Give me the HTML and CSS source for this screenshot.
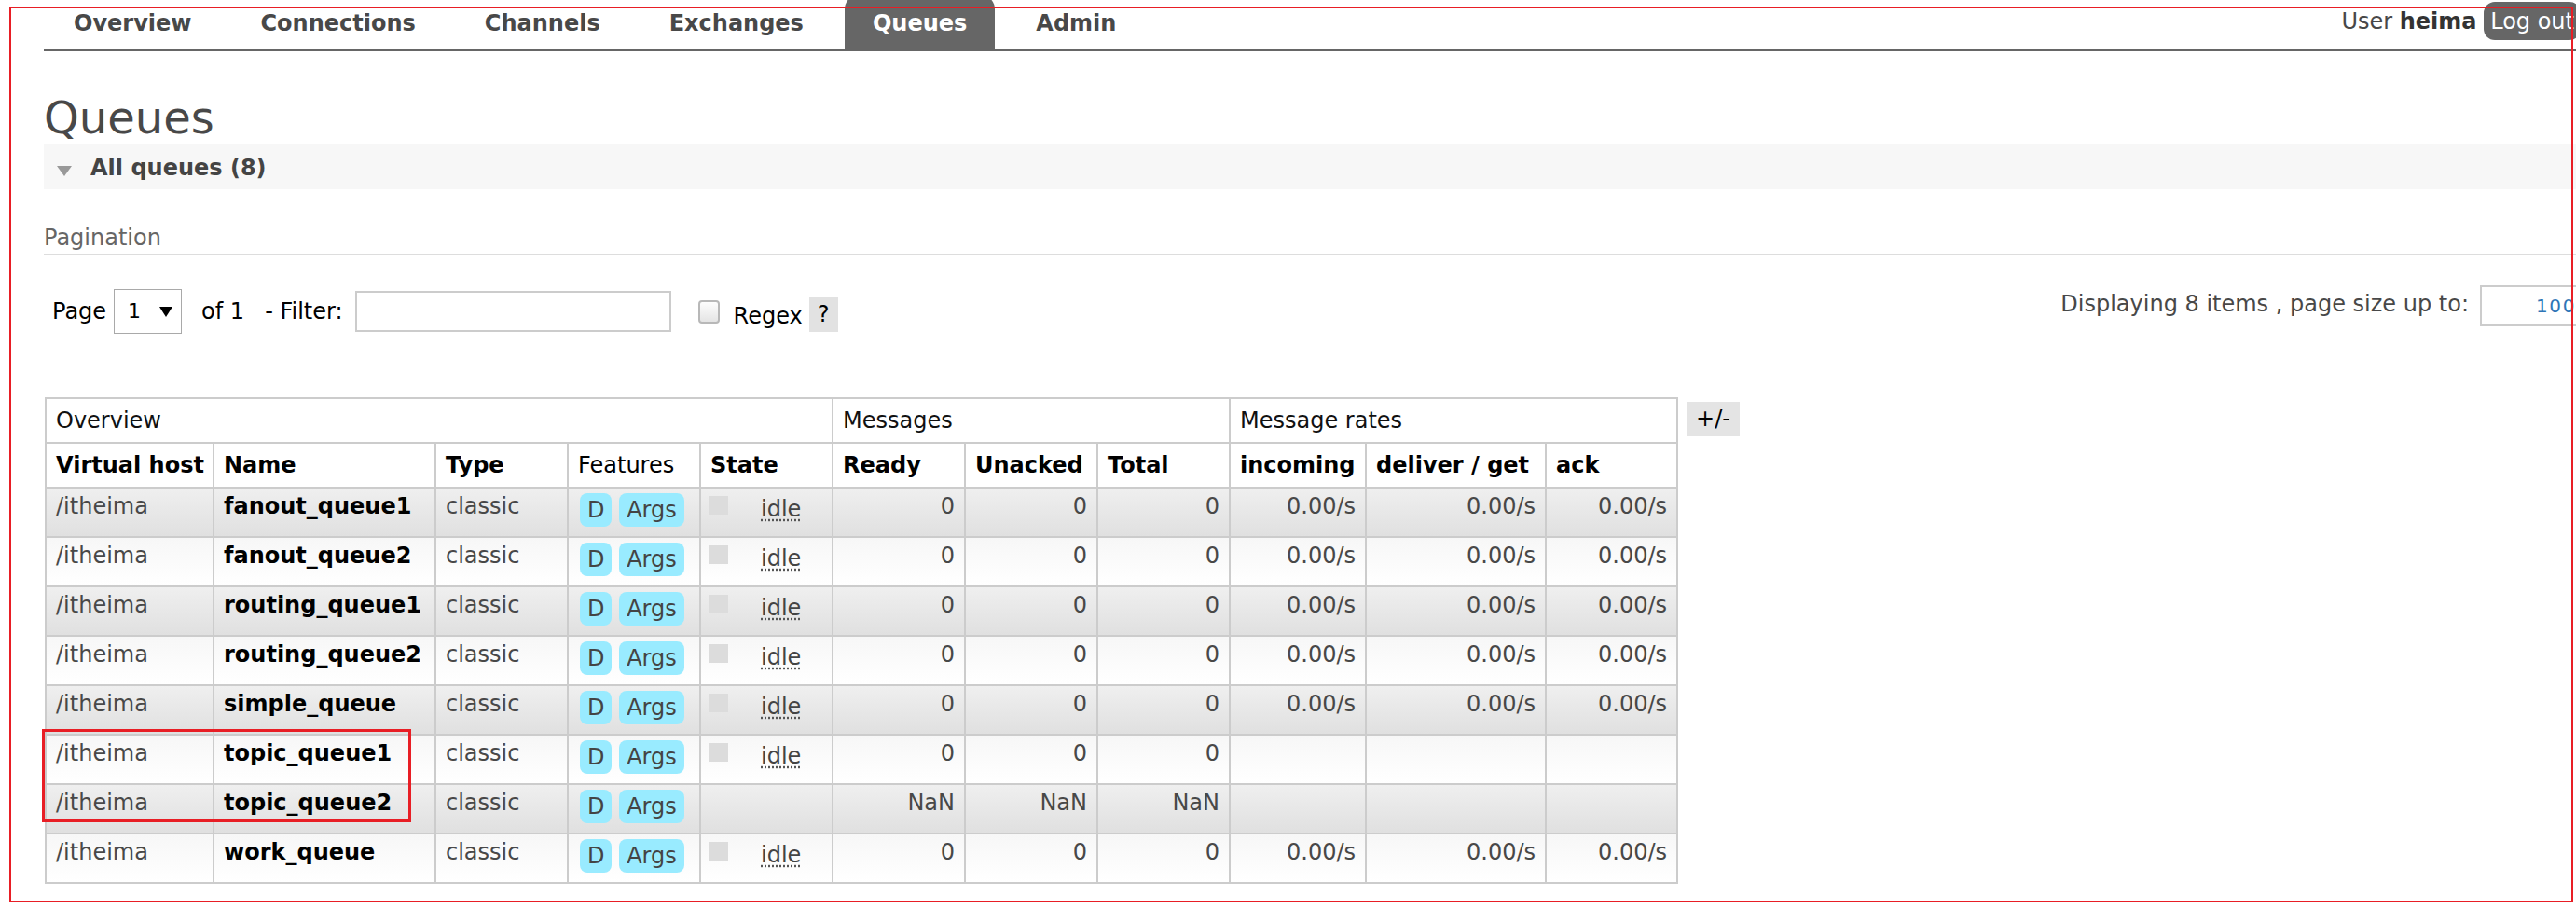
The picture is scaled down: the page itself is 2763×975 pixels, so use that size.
FILE: index.html
```html
<!DOCTYPE html>
<html lang="en">
<head>
<meta charset="utf-8">
<title>RabbitMQ Management: Queues</title>
<link rel="stylesheet" href="styles.css">
</head>
<body>
<div class="page">
  <header class="topbar">
    <ul class="menu">
      <li><a>Overview</a></li>
      <li><a>Connections</a></li>
      <li><a>Channels</a></li>
      <li><a>Exchanges</a></li>
      <li><a class="selected">Queues</a></li>
      <li><a>Admin</a></li>
    </ul>
    <div class="login">User <b>heima</b> <span class="logout">Log out</span></div>
  </header>

  <h1 class="title">Queues</h1>

  <div class="section-head"><span class="tri"></span><h2>All queues (8)</h2></div>

  <h3 class="pag-title">Pagination</h3>
  <div class="pag-row">
    <div class="pag-left">
      <span class="lbl lbl-page">Page</span>
      <span class="fake-select"><span>1</span><span class="arrow"></span></span>
      <span class="lbl lbl-of">of 1</span>
      <span class="lbl lbl-filter">- Filter:</span>
      <input class="filter" type="text">
      <span class="checkbox"></span>
      <span class="lbl lbl-regex">Regex</span>
      <span class="help">?</span>
    </div>
    <div class="pag-right">
      <span class="lbl lbl-display">Displaying 8 items , page size up to:</span>
      <input class="pagesize" type="text" value="100">
    </div>
  </div>

  <div class="table-wrap">
    <table class="list">
      <colgroup>
        <col class="w-vh"><col class="w-name"><col class="w-std"><col class="w-std"><col class="w-std"><col class="w-std"><col class="w-std"><col class="w-std"><col class="w-inc"><col class="w-del"><col class="w-ack">
      </colgroup>
      <thead>
        <tr class="group"><th colspan="5">Overview</th><th colspan="3">Messages</th><th colspan="3">Message rates</th></tr>
        <tr><th>Virtual host</th><th>Name</th><th>Type</th><th class="plain">Features</th><th>State</th><th>Ready</th><th>Unacked</th><th>Total</th><th>incoming</th><th>deliver / get</th><th>ack</th></tr>
      </thead>
      <tbody>
        <tr class="alt1"><td>/itheima</td><td class="name">fanout_queue1</td><td>classic</td><td class="feat"><span class="badge">D</span> <span class="badge">Args</span></td><td><span class="sq"></span><abbr class="idle">idle</abbr></td><td class="r">0</td><td class="r">0</td><td class="r">0</td><td class="r">0.00/s</td><td class="r">0.00/s</td><td class="r">0.00/s</td></tr>
        <tr class="alt2"><td>/itheima</td><td class="name">fanout_queue2</td><td>classic</td><td class="feat"><span class="badge">D</span> <span class="badge">Args</span></td><td><span class="sq"></span><abbr class="idle">idle</abbr></td><td class="r">0</td><td class="r">0</td><td class="r">0</td><td class="r">0.00/s</td><td class="r">0.00/s</td><td class="r">0.00/s</td></tr>
        <tr class="alt1"><td>/itheima</td><td class="name">routing_queue1</td><td>classic</td><td class="feat"><span class="badge">D</span> <span class="badge">Args</span></td><td><span class="sq"></span><abbr class="idle">idle</abbr></td><td class="r">0</td><td class="r">0</td><td class="r">0</td><td class="r">0.00/s</td><td class="r">0.00/s</td><td class="r">0.00/s</td></tr>
        <tr class="alt2"><td>/itheima</td><td class="name">routing_queue2</td><td>classic</td><td class="feat"><span class="badge">D</span> <span class="badge">Args</span></td><td><span class="sq"></span><abbr class="idle">idle</abbr></td><td class="r">0</td><td class="r">0</td><td class="r">0</td><td class="r">0.00/s</td><td class="r">0.00/s</td><td class="r">0.00/s</td></tr>
        <tr class="alt1"><td>/itheima</td><td class="name">simple_queue</td><td>classic</td><td class="feat"><span class="badge">D</span> <span class="badge">Args</span></td><td><span class="sq"></span><abbr class="idle">idle</abbr></td><td class="r">0</td><td class="r">0</td><td class="r">0</td><td class="r">0.00/s</td><td class="r">0.00/s</td><td class="r">0.00/s</td></tr>
        <tr class="alt2"><td>/itheima</td><td class="name">topic_queue1</td><td>classic</td><td class="feat"><span class="badge">D</span> <span class="badge">Args</span></td><td><span class="sq"></span><abbr class="idle">idle</abbr></td><td class="r">0</td><td class="r">0</td><td class="r">0</td><td class="r"></td><td class="r"></td><td class="r"></td></tr>
        <tr class="alt1"><td>/itheima</td><td class="name">topic_queue2</td><td>classic</td><td class="feat"><span class="badge">D</span> <span class="badge">Args</span></td><td></td><td class="r">NaN</td><td class="r">NaN</td><td class="r">NaN</td><td class="r"></td><td class="r"></td><td class="r"></td></tr>
        <tr class="alt2"><td>/itheima</td><td class="name">work_queue</td><td>classic</td><td class="feat"><span class="badge">D</span> <span class="badge">Args</span></td><td><span class="sq"></span><abbr class="idle">idle</abbr></td><td class="r">0</td><td class="r">0</td><td class="r">0</td><td class="r">0.00/s</td><td class="r">0.00/s</td><td class="r">0.00/s</td></tr>
      </tbody>
    </table>
    <span class="plusminus">+/-</span>
  </div>
</div>

<div class="annot annot-page"></div>
<div class="annot annot-rows"></div>
</body>
</html>
```

FILE: styles.css
```css
* { box-sizing: border-box; }

html, body {
  margin: 0;
  padding: 0;
  overflow: hidden;
  background: #fff;
}

body {
  font-family: "DejaVu Sans", Verdana, sans-serif;
  font-size: 24px;
  line-height: 28px;
  color: #484848;
  height: 975px;
}

.page {
  width: 2768px;
  padding-left: 47px;
}

/* ---------- header / menu ---------- */
.topbar {
  display: flex;
  justify-content: space-between;
  align-items: flex-start;
  margin-top: -6px;
  border-bottom: 2px solid #666;
}

.menu {
  display: flex;
  list-style: none;
  margin: 0;
  padding: 0 0 0 2px;
}

.menu li { margin-right: 14px; }

.menu a {
  display: block;
  padding: 17px 30px 14px;
  font-weight: bold;
  color: #484848;
  text-decoration: none;
  border-radius: 16px 16px 0 0;
}

.menu a.selected {
  background: #666;
  color: #fff;
}

.login {
  margin-top: 8px;
  white-space: nowrap;
}

.login b { color: #333; }

.logout {
  display: inline-block;
  background: #666;
  color: #fff;
  padding: 7px 7px 6px;
  border-radius: 12px;
}

/* ---------- title & section ---------- */
.title {
  margin: 43px 0 0;
  font-size: 48px;
  line-height: 56px;
  font-weight: normal;
  color: #484848;
}

.section-head {
  display: flex;
  align-items: flex-start;
  background: #f7f7f7;
  padding: 12px 0 9px 14px;
}

.tri {
  width: 0;
  height: 0;
  border-left: 8px solid transparent;
  border-right: 8px solid transparent;
  border-top: 11px solid #999;
  margin: 12px 20px 0 0;
}

.section-head h2 {
  margin: 0;
  font-size: 24px;
  line-height: 28px;
  font-weight: bold;
  color: #444;
}

/* ---------- pagination ---------- */
.pag-title {
  margin: 38px 0 0;
  font-size: 24px;
  line-height: 28px;
  font-weight: normal;
  color: #666;
  padding-bottom: 3px;
  border-bottom: 2px solid #ddd;
}

.pag-row {
  display: flex;
  justify-content: space-between;
  align-items: flex-start;
  margin-top: 32px;
  color: #000;
}

.pag-left, .pag-right {
  display: flex;
  align-items: flex-start;
}

.lbl { white-space: nowrap; }

.lbl-page { margin: 14px 0 0 9px; }

.fake-select {
  display: flex;
  align-items: center;
  width: 73px;
  height: 48px;
  margin: 4px 0 0 8px;
  border: 1px solid #a9a9a9;
  padding-left: 14px;
  font-size: 22px;
  line-height: 26px;
  background: #fff;
}

.fake-select .arrow {
  width: 0;
  height: 0;
  border-left: 7px solid transparent;
  border-right: 7px solid transparent;
  border-top: 11px solid #000;
  margin-left: 20px;
}

.lbl-of { margin: 14px 0 0 21px; }
.lbl-filter { margin: 14px 0 0 22px; }

.filter {
  width: 339px;
  height: 44px;
  margin: 6px 0 0 13px;
  border: 2px solid #ccc;
  padding: 0 4px;
  background: #fff;
  outline: none;
}

.checkbox {
  width: 23px;
  height: 25px;
  margin: 16px 0 0 29px;
  border: 2px solid #b8b8b8;
  border-radius: 4px;
  background: linear-gradient(#fdfdfd, #e4e4e4);
}

.lbl-regex { margin: 19px 0 0 15px; }

.help {
  margin: 13px 0 0 7px;
  width: 31px;
  padding: 4px 0 5px;
  text-align: center;
  background: #e2e2e2;
}

.lbl-display {
  margin-top: 6px;
  color: #484848;
}

.pagesize {
  width: 108px;
  height: 44px;
  margin-left: 12px;
  border: 2px solid #ccc;
  padding: 0 3px 0 0;
  font-family: "DejaVu Sans", Verdana, sans-serif;
  font-size: 20px;
  letter-spacing: 1.6px;
  color: #2e75b6;
  text-align: right;
  background: #fff;
  outline: none;
}

/* ---------- table ---------- */
.table-wrap {
  display: flex;
  align-items: flex-start;
  margin: 68px 0 0 1px;
}

table.list {
  table-layout: fixed;
  width: 1752px;
  border-collapse: separate;
  border-spacing: 0;
  border-top: 2px solid #ccc;
  border-left: 2px solid #ccc;
}

.w-vh { width: 180px; }
.w-name { width: 238px; }
.w-std { width: 142px; }
.w-inc { width: 146px; }
.w-del { width: 193px; }
.w-ack { width: 141px; }

.list th, .list td {
  border-right: 2px solid #ccc;
  border-bottom: 2px solid #ccc;
  text-align: left;
  vertical-align: top;
  white-space: nowrap;
}

.list th {
  padding: 9px 10px;
  color: #000;
  font-weight: bold;
  background: #fff;
}

.list tr.group th {
  font-weight: normal;
  color: #111;
}

.list th.plain { font-weight: normal; }

.list td {
  padding: 5px 10px 10px;
  color: #484848;
}

.list td.r { text-align: right; }

.list td.name {
  font-weight: bold;
  color: #000;
}

.list td.feat { padding-left: 12px; }

.list tr.alt1 td { background: linear-gradient(#efefef, #e0e0e0); }
.list tr.alt2 td { background: linear-gradient(#f7f7f7, #ffffff); }

.badge {
  display: inline-block;
  background: #99ebff;
  color: #444;
  padding: 4px 8px;
  border-radius: 8px;
}

.sq {
  display: inline-block;
  width: 20px;
  height: 20px;
  background: #dcdcdc;
  vertical-align: -1px;
  margin: 0 35px 0 -1px;
}

.idle {
  vertical-align: -3px;
  color: #444;
  text-decoration: underline dotted #555;
  text-underline-offset: 3px;
}

.plusminus {
  margin: 5px 0 0 9px;
  padding: 4px 10px 5px;
  background: #e4e4e4;
  color: #000;
}

/* ---------- annotation overlays ---------- */
.annot {
  position: absolute;
  border: 2px solid #e81e25;
  pointer-events: none;
}

.annot-page {
  left: 10px;
  top: 7px;
  width: 2750px;
  height: 961px;
}

.annot-rows {
  left: 45px;
  top: 782px;
  width: 396px;
  height: 100px;
  border-width: 3px;
}
```
